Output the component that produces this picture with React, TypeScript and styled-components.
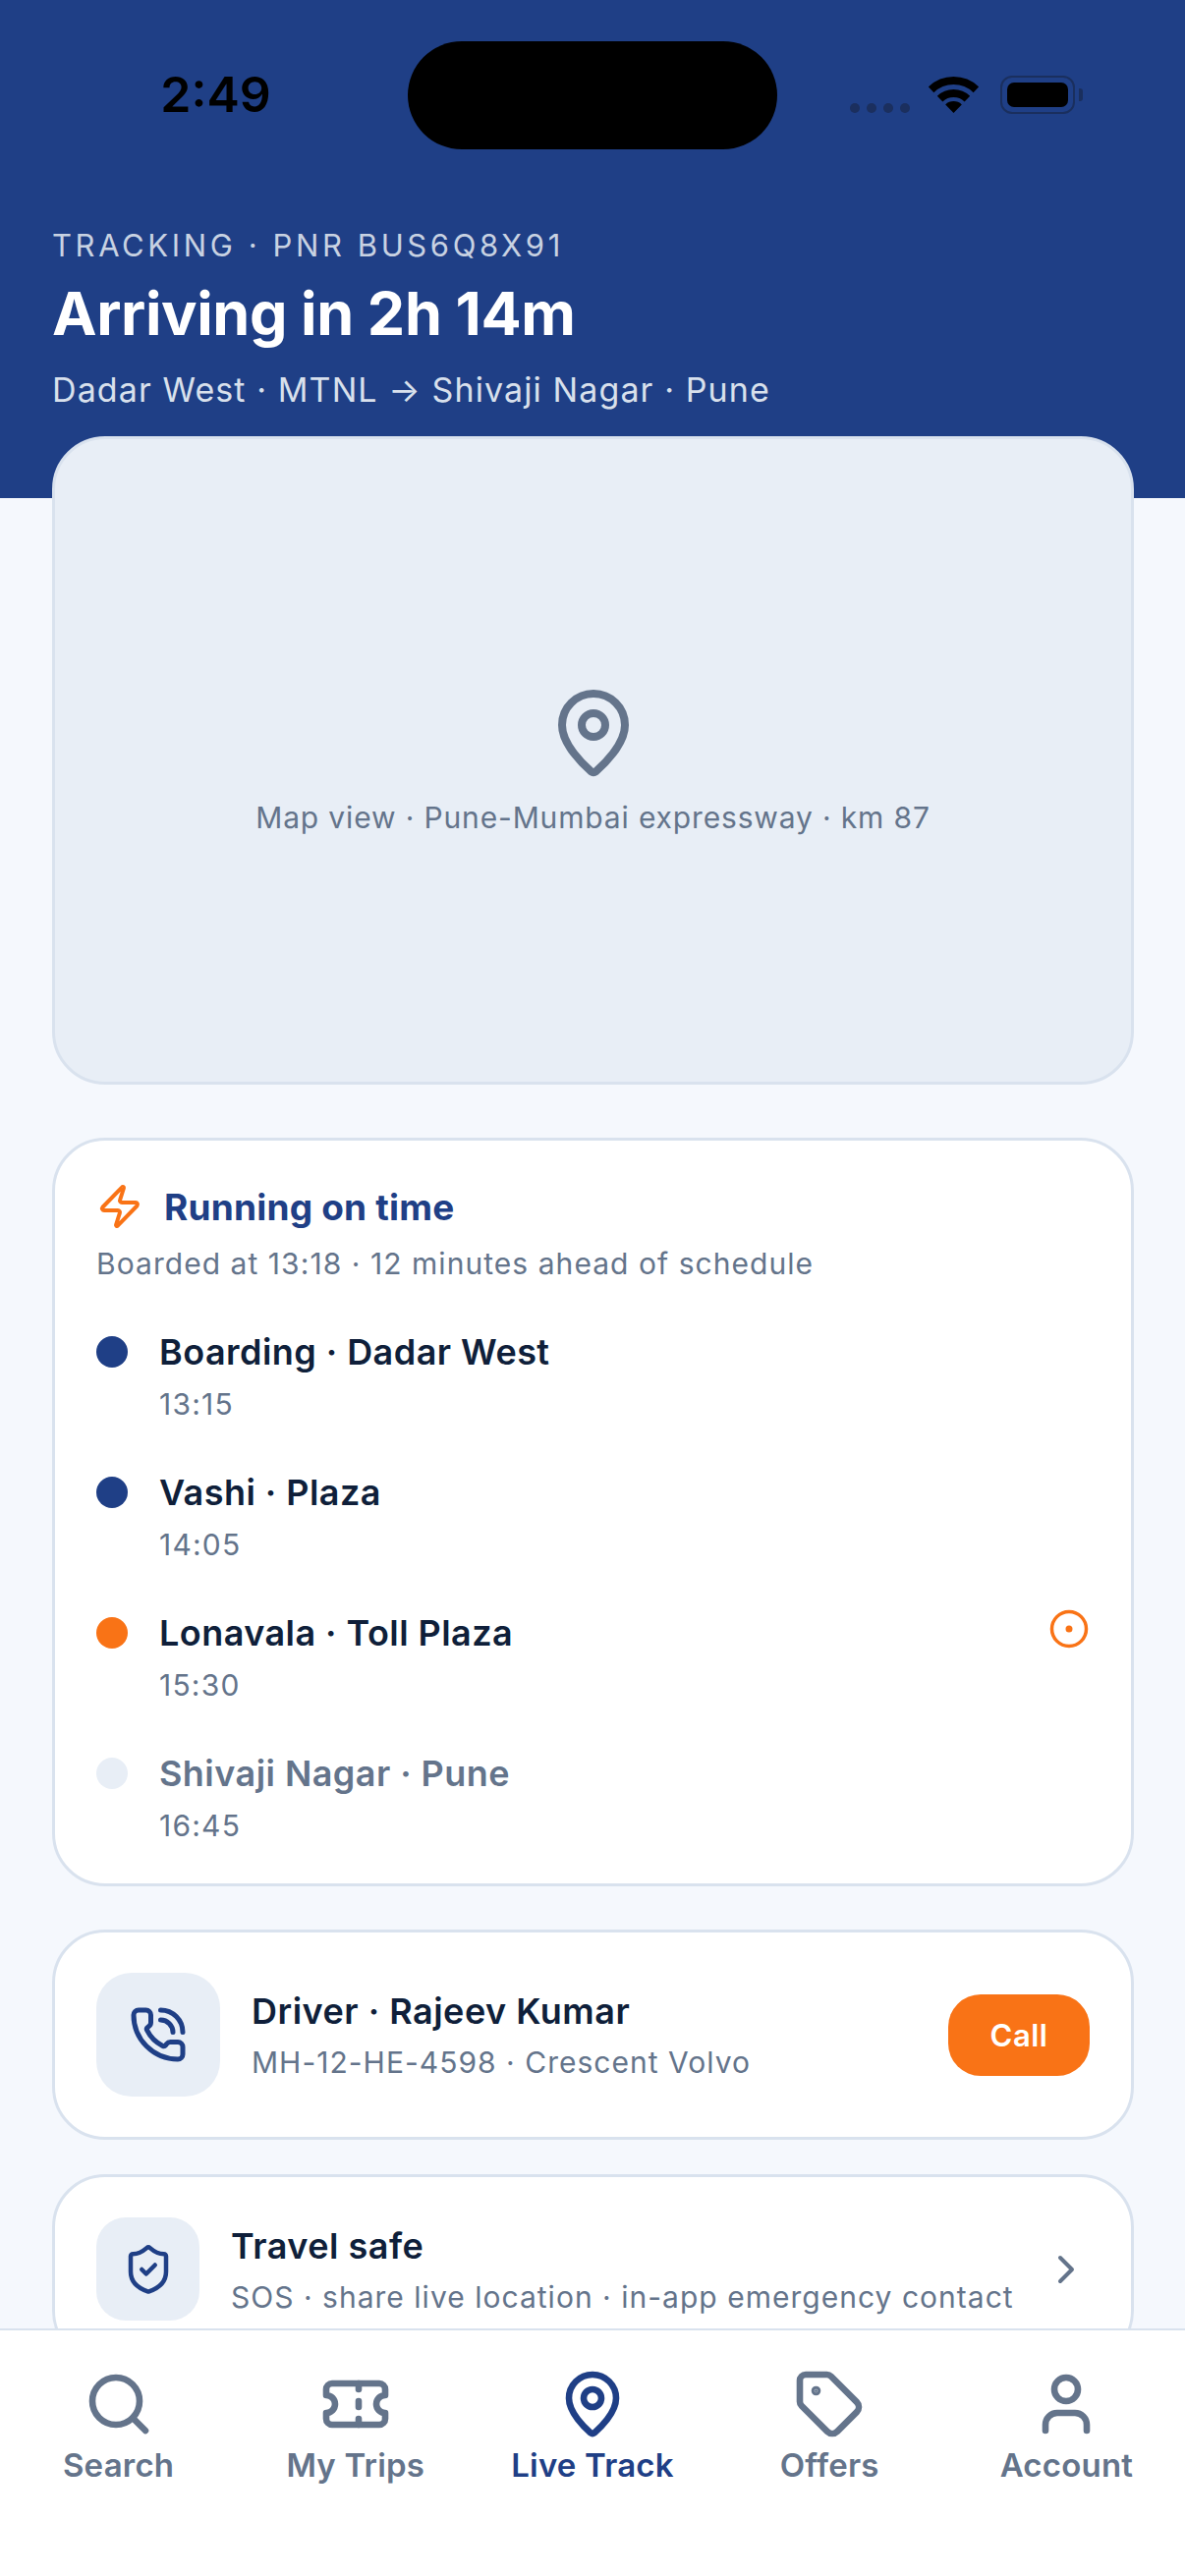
import React from 'react';
import styled, { createGlobalStyle } from 'styled-components';
import { ChevronRight, CircleDot, MapPin, PhoneCall, Search, ShieldCheck, Tag, Ticket, User, Zap } from 'lucide-react';

const BLUE = '#1f3f86';
const ORANGE = '#f97316';
const INK = '#0f1f3a';
const SLATE = '#64748b';
const LINE = '#d9e2ee';
const TINT = '#e8eef6';

const GlobalStyle = createGlobalStyle`
  html, body {
    margin: 0;
    padding: 0;
    background: #f5f8fd;
  }
  * {
    box-sizing: border-box;
  }
`;

const Screen = styled.div`
  width: 1206px;
  height: 2622px;
  display: flex;
  flex-direction: column;
  overflow: hidden;
  background: #f5f8fd;
  font-family: Inter, "Noto Sans", sans-serif;
`;

const Main = styled.main`
  flex: 1;
  min-height: 0;
  overflow: hidden;
`;

const Header = styled.header`
  height: 507px;
  padding: 42px 53px 0;
  background: ${BLUE};
`;

const StatusBar = styled.div`
  display: grid;
  grid-template-columns: 391px 400px 1fr;
  height: 110px;
  margin: 0 -53px;
  padding-left: 24px;
`;

const Clock = styled.div`
  align-self: center;
  justify-self: center;
  margin-bottom: 2px;
  font-size: 50px;
  font-weight: 600;
  color: #000;
`;

const Island = styled.div`
  width: 376px;
  height: 110px;
  border-radius: 55px;
  background: #000;
`;

const StatusIcons = styled.div`
  display: flex;
  align-items: center;
  gap: 22px;
  padding-left: 50px;
  padding-bottom: 2px;
`;

const SignalDots = styled.div`
  display: flex;
  gap: 7px;
  margin-top: 28px;
  margin-right: -3px;
`;

const SignalDot = styled.span`
  width: 10px;
  height: 10px;
  border-radius: 50%;
  background: #1b2f5e;
`;

const Battery = styled.div`
  position: relative;
  width: 76px;
  height: 39px;
  padding: 5px;
  border: 2px solid #1a2f5e;
  border-radius: 12px;
`;

const BatteryFill = styled.div`
  height: 100%;
  border-radius: 7px;
  background: #000;
`;

const BatteryCap = styled.span`
  position: absolute;
  right: -10px;
  top: 11px;
  width: 4px;
  height: 13px;
  border-radius: 0 3px 3px 0;
  background: #1a2f5e;
`;

const Eyebrow = styled.div`
  margin-top: 79px;
  font-size: 31px;
  line-height: 38px;
  letter-spacing: 3.6px;
  color: #c8d2e2;
`;

const Title = styled.h1`
  margin: 12px 0 0;
  font-size: 61px;
  line-height: 76px;
  font-weight: 700;
  letter-spacing: -0.4px;
  color: #fff;
`;

const Route = styled.div`
  margin-top: 17px;
  font-size: 34px;
  line-height: 46px;
  letter-spacing: 1.1px;
  color: #d8e0ec;
`;

const Body = styled.div`
  display: flex;
  flex-direction: column;
  margin-top: -63px;
  padding: 0 52px 0 53px;
`;

const MapPanel = styled.div`
  height: 660px;
  display: flex;
  flex-direction: column;
  align-items: center;
  justify-content: center;
  gap: 20px;
  border: 3px solid ${LINE};
  border-radius: 54px;
  background: ${TINT};
  color: ${SLATE};
  font-size: 30px;
  letter-spacing: 0.85px;
`;

const Card = styled.section<{ $top: number }>`
  margin-top: ${p => p.$top}px;
  border: 3px solid ${LINE};
  border-radius: 54px;
  background: #fff;
`;

const TimelineCard = styled(Card)`
  height: 762px;
  padding: 41px 42px 0;
`;

const StatusLine = styled.div`
  display: flex;
  align-items: center;
  gap: 21px;
  height: 48px;
  margin-top: 2px;
`;

const StatusTitle = styled.div`
  font-size: 37px;
  font-weight: 700;
  letter-spacing: 0.2px;
  color: ${BLUE};
`;

const StatusNote = styled.div`
  margin-top: 14px;
  font-size: 30px;
  line-height: 40px;
  letter-spacing: 1.05px;
  color: ${SLATE};
`;

const Stops = styled.div`
  margin-top: 45px;
`;

const Stop = styled.div`
  display: flex;
  align-items: flex-start;
  height: 143px;
`;

const StopDot = styled.span<{ $color: string }>`
  flex: none;
  width: 32px;
  height: 32px;
  margin-top: 9px;
  margin-right: 32px;
  border-radius: 50%;
  background: ${p => p.$color};
`;

const StopText = styled.div`
  flex: 1;
`;

const StopName = styled.div<{ $muted?: boolean }>`
  font-size: 36px;
  line-height: 50px;
  font-weight: 600;
  letter-spacing: 0.45px;
  color: ${p => (p.$muted ? SLATE : INK)};
`;

const StopTime = styled.div`
  margin-top: 8px;
  font-size: 30px;
  line-height: 40px;
  letter-spacing: 1.2px;
  color: ${SLATE};
`;

const RowCard = styled(Card)`
  display: flex;
  align-items: center;
  gap: 32px;
  padding: 41px 42px;
`;

const IconTile = styled.div<{ $size: number; $radius: number }>`
  flex: none;
  display: flex;
  align-items: center;
  justify-content: center;
  width: ${p => p.$size}px;
  height: ${p => p.$size}px;
  border-radius: ${p => p.$radius}px;
  background: ${TINT};
`;

const RowText = styled.div`
  flex: 1;
  min-width: 0;
`;

const RowTitle = styled.div`
  font-size: 36px;
  line-height: 48px;
  font-weight: 600;
  letter-spacing: 0.5px;
  color: ${INK};
`;

const RowNote = styled.div`
  margin-top: 8px;
  font-size: 30px;
  line-height: 40px;
  letter-spacing: 1.02px;
  color: ${SLATE};
  white-space: nowrap;
`;

const CallButton = styled.button`
  width: 144px;
  height: 83px;
  border: 0;
  border-radius: 33px;
  background: ${ORANGE};
  color: #fff;
  font: 600 31px Inter, sans-serif;
  letter-spacing: 0.5px;
`;

const Nav = styled.nav`
  flex: none;
  height: 252px;
  display: grid;
  grid-template-columns: repeat(5, 1fr);
  padding-top: 39px;
  border-top: 2px solid ${LINE};
  background: #fff;
`;

const NavItem = styled.div<{ $active?: boolean }>`
  display: flex;
  flex-direction: column;
  align-items: center;
  gap: 6px;
  font-size: 33px;
  line-height: 40px;
  font-weight: 600;
  letter-spacing: 0.2px;
  color: ${p => (p.$active ? BLUE : SLATE)};
`;

const Wifi = () => (
  <svg width="51" height="37" viewBox="0 0 51 37" fill="none">
    <path d="M2.6 13.3A33 33 0 0 1 48.4 13.3" stroke="#000" strokeWidth="8" />
    <path d="M11.6 22.6A20 20 0 0 1 39.4 22.6" stroke="#000" strokeWidth="8" />
    <path d="M25.5 37L17.2 28.4A12 12 0 0 1 33.8 28.4Z" fill="#000" />
  </svg>
);

const stops = [
  { name: 'Boarding · Dadar West', time: '13:15', dot: BLUE },
  { name: 'Vashi · Plaza', time: '14:05', dot: BLUE },
  { name: 'Lonavala · Toll Plaza', time: '15:30', dot: ORANGE, current: true },
  { name: 'Shivaji Nagar · Pune', time: '16:45', dot: TINT, muted: true },
];

const navItems = [
  { label: 'Search', icon: Search },
  { label: 'My Trips', icon: Ticket },
  { label: 'Live Track', icon: MapPin, active: true },
  { label: 'Offers', icon: Tag },
  { label: 'Account', icon: User },
];

export default function App() {
  return (
    <Screen>
      <GlobalStyle />
      <Main>
        <Header>
          <StatusBar>
            <Clock>2:49</Clock>
            <Island />
            <StatusIcons>
              <SignalDots>
                <SignalDot />
                <SignalDot />
                <SignalDot />
                <SignalDot />
              </SignalDots>
              <Wifi />
              <Battery>
                <BatteryFill />
                <BatteryCap />
              </Battery>
            </StatusIcons>
          </StatusBar>
          <Eyebrow>TRACKING · PNR BUS6Q8X91</Eyebrow>
          <Title>Arriving in 2h 14m</Title>
          <Route>Dadar West · MTNL → Shivaji Nagar · Pune</Route>
        </Header>
        <Body>
          <MapPanel>
            <MapPin size={96} strokeWidth={2} color={SLATE} />
            <div>Map view · Pune-Mumbai expressway · km 87</div>
          </MapPanel>
          <TimelineCard $top={54}>
            <StatusLine>
              <Zap size={48} strokeWidth={2} color={ORANGE} />
              <StatusTitle>Running on time</StatusTitle>
            </StatusLine>
            <StatusNote>Boarded at 13:18 · 12 minutes ahead of schedule</StatusNote>
            <Stops>
              {stops.map(stop => (
                <Stop key={stop.name}>
                  <StopDot $color={stop.dot} />
                  <StopText>
                    <StopName $muted={stop.muted}>{stop.name}</StopName>
                    <StopTime>{stop.time}</StopTime>
                  </StopText>
                  {stop.current && <CircleDot size={42} strokeWidth={2} color={ORANGE} />}
                </Stop>
              ))}
            </Stops>
          </TimelineCard>
          <RowCard $top={44}>
            <IconTile $size={126} $radius={36}>
              <PhoneCall size={60} strokeWidth={2} color={BLUE} />
            </IconTile>
            <RowText>
              <RowTitle>Driver · Rajeev Kumar</RowTitle>
              <RowNote>MH-12-HE-4598 · Crescent Volvo</RowNote>
            </RowText>
            <CallButton>Call</CallButton>
          </RowCard>
          <RowCard $top={35}>
            <IconTile $size={105} $radius={30}>
              <ShieldCheck size={54} strokeWidth={2} color={BLUE} />
            </IconTile>
            <RowText>
              <RowTitle>Travel safe</RowTitle>
              <RowNote>SOS · share live location · in-app emergency contact</RowNote>
            </RowText>
            <ChevronRight size={48} strokeWidth={2} color={SLATE} />
          </RowCard>
        </Body>
      </Main>
      <Nav>
        {navItems.map(item => (
          <NavItem key={item.label} $active={item.active}>
            <item.icon size={72} strokeWidth={2.2} />
            {item.label}
          </NavItem>
        ))}
      </Nav>
    </Screen>
  );
}
